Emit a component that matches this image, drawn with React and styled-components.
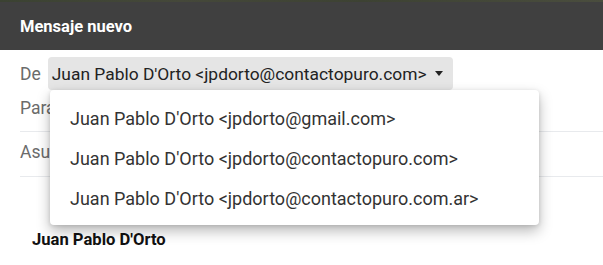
import React from 'react';
import styled, { createGlobalStyle } from 'styled-components';

const GlobalStyle = createGlobalStyle`
    html, body {
        margin: 0;
        padding: 0;
        background: #ffffff;
    }
    body {
        font-family: Roboto, "Liberation Sans", Arial, sans-serif;
    }
`;

const Window = styled.div`
    position: relative;
    width: 603px;
    height: 265px;
    overflow: hidden;
    background: #ffffff;
`;

const Backdrop = styled.div`
    height: 2px;
    background: linear-gradient(90deg, #3b4232 0%, #45483a 30%, #3d4233 60%, #4a4d3e 100%);
`;

const Header = styled.header`
    height: 48px;
    display: flex;
    align-items: center;
    padding: 0 20px;
    background: #404040;
`;

const Title = styled.h1`
    margin: 0;
    font-size: 16.5px;
    font-weight: 700;
    color: #ffffff;
`;

const Fields = styled.div`
    display: flex;
    flex-direction: column;
`;

const FieldRow = styled.div`
    display: flex;
    align-items: center;
    box-sizing: border-box;
    height: ${props => props.height}px;
    padding-top: ${props => props.padTop || 0}px;
    padding-bottom: ${props => props.padBottom || 0}px;
    margin-left: 20px;
    border-bottom: ${props => (props.divider ? '1px solid #e8eaed' : 'none')};
`;

const Label = styled.span`
    font-size: 17.5px;
    color: #6b6b6b;
`;

const FromSelect = styled.button`
    display: flex;
    align-items: center;
    gap: 8px;
    height: 33px;
    margin-left: 7px;
    padding: 0 10px 0 4px;
    border: none;
    border-radius: 4px;
    background: #e5e5e5;
    font-family: inherit;
    font-size: 17.4px;
    color: #222222;
    cursor: pointer;
`;

const Caret = styled.span`
    width: 0;
    height: 0;
    border-left: 4.5px solid transparent;
    border-right: 4.5px solid transparent;
    border-top: 5px solid #222222;
`;

const Signature = styled.div`
    padding: 53px 0 0 32px;
    font-size: 16.6px;
    font-weight: 700;
    color: #111111;
`;

const Menu = styled.ul`
    position: absolute;
    left: 50px;
    top: 90px;
    width: 489px;
    margin: 0;
    padding: 8px 0 7px;
    list-style: none;
    background: #ffffff;
    border-radius: 4px;
    box-shadow: 0 6px 14px rgba(0, 0, 0, 0.28), 0 1px 4px rgba(0, 0, 0, 0.12);
`;

const MenuItem = styled.li`
    height: 40px;
    display: flex;
    align-items: center;
    padding-left: 20px;
    font-size: 18px;
    color: #333333;
`;

const senders = [
    "Juan Pablo D'Orto <jpdorto@gmail.com>",
    "Juan Pablo D'Orto <jpdorto@contactopuro.com>",
    "Juan Pablo D'Orto <jpdorto@contactopuro.com.ar>",
];

const App = () => {
    return (
        <Window>
            <GlobalStyle />
            <Backdrop />
            <Header>
                <Title>Mensaje nuevo</Title>
            </Header>
            <Fields>
                <FieldRow height={40} padTop={7}>
                    <Label>De</Label>
                    <FromSelect>
                        {senders[1]}
                        <Caret />
                    </FromSelect>
                </FieldRow>
                <FieldRow height={42} padBottom={6} divider>
                    <Label>Para</Label>
                </FieldRow>
                <FieldRow height={45} padBottom={5} divider>
                    <Label>Asunto</Label>
                </FieldRow>
            </Fields>
            <Signature>Juan Pablo D'Orto</Signature>
            <Menu>
                {senders.map(s => (
                    <MenuItem key={s}>{s}</MenuItem>
                ))}
            </Menu>
        </Window>
    );
};

export default App;
